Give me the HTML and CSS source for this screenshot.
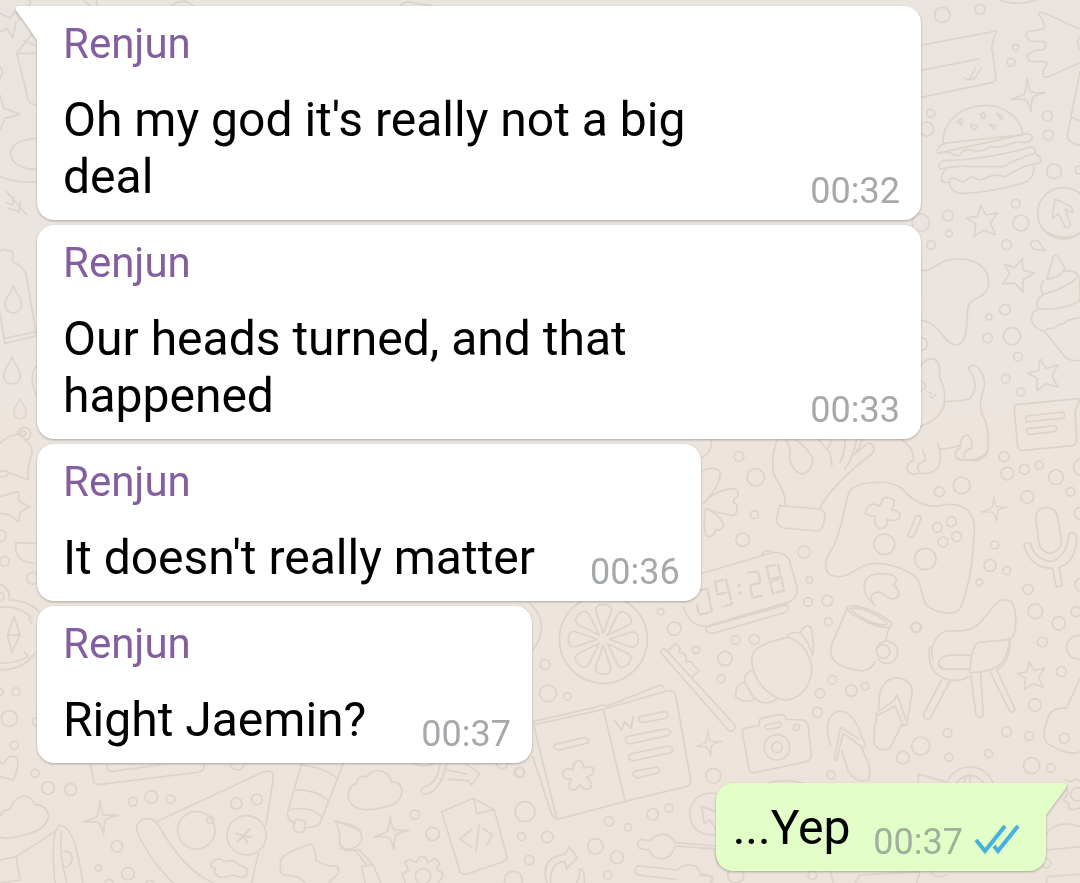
FILE: index.html
```
<!DOCTYPE html>
<html lang="en">
<head>
<meta charset="utf-8">
<meta name="viewport" content="width=device-width, initial-scale=1">
<title>Chat</title>
<link rel="stylesheet" href="styles.css">
</head>
<body>
<main class="chat">
<svg class="wallpaper" viewBox="0 0 1080 883" preserveAspectRatio="xMidYMin slice" aria-hidden="true">
  <defs>
    <path id="star" d="M0-48L12-16 48-18 22 10 32 46 0 28-32 42-22 6-47-16-13-16Z"/>
    <path id="spark" d="M-3-52Q2-12 8-10 20-7 52-8 18 0 14 6 8 18 8 50 0 18-8 14-18 10-52 12-16 0-12-5-6-18-3-52Z"/>
    <path id="drop" d="M0-38C-8-12-25 0-25 19A25 25 0 0 0 25 19C25 0 8-12 0-38Z"/>
  </defs>

  <!-- ticket, burger, hand, cursor -->
  <g transform="translate(900 0) scale(.3333)">
    <path d="M60 136L290 93Q270 135 278 160L288 235Q288 245 275 248L60 293M60 212L235 177M192 233L206 240 226 206M222 238L243 205M208 240L220 234"/>
    <path d="M540 88L435 40Q415 33 417 45 440 75 432 85 420 92 385 93 370 107 390 123 430 123 437 128 440 140 428 150 395 150 383 165 378 180 395 185 435 180 443 190 425 215 430 228 435 235 450 228L540 188M540 110Q525 128 540 148"/>
    <path d="M130 430C125 370 180 315 260 316 330 318 365 370 368 402M130 430L368 404M112 452Q115 435 135 430M368 404Q395 396 397 412 395 425 375 428 355 422 330 432 300 445 270 440 245 460 215 450 190 445 180 465 165 470 150 458 130 455 112 460Z"/>
    <path d="M130 482Q260 480 395 440 412 450 405 460 340 480 310 500 260 500 215 500 170 495 120 508 110 495 130 482ZM135 510Q125 520 124 540 130 550 148 546 150 530 165 535L190 547 212 530 240 540 280 525 315 530 370 500 422 487Q425 470 407 462M148 546Q150 580 190 580 290 575 380 545 405 530 401 497"/>
    <path d="M172 366L186 354 184 374ZM242 344L252 336 256 352 248 356ZM290 340L308 350 304 360ZM212 372L232 378 226 390 216 386ZM268 372L288 378 280 386Z"/>
    <path d="M540 215L502 405Q502 430 540 436M515 353L540 362"/>
    <circle cx="490" cy="640" r="77"/><path d="M465 597L515 620 518 637 496 628 512 675Q505 688 495 680L475 640 457 656Z"/>
    <use href="#spark" x="385" y="286"/><use href="#star" transform="translate(248 663) rotate(-8)"/>
    <circle cx="127" cy="45" r="23"/><circle cx="240" cy="28" r="15"/><circle cx="347" cy="142" r="9"/><circle cx="333" cy="187" r="12"/><circle cx="92" cy="340" r="12"/><circle cx="80" cy="387" r="21"/><circle cx="442" cy="348" r="15"/><circle cx="445" cy="405" r="15"/><circle cx="462" cy="514" r="22"/><circle cx="538" cy="510" r="12"/><circle cx="347" cy="611" r="13"/><circle cx="363" cy="669" r="24"/><circle cx="143" cy="647" r="16"/><circle cx="62" cy="668" r="26"/><circle cx="147" cy="701" r="10"/>
    <path d="M300 0Q350 20 410 0"/>
  </g>

  <!-- blob, cat, cupcake, card -->
  <g transform="translate(900 230) scale(.3333)">
    <path d="M60 120C90 130 110 100 140 91 220 75 270 110 266 165 255 215 205 195 203 240 200 300 200 345 165 345 130 340 115 270 60 272"/>
    <path d="M62 410Q75 385 98 386 125 395 118 440 140 480 132 530 110 575 60 590M138 515Q190 512 205 508 235 485 220 440L205 415Q215 400 232 410 260 440 252 475 235 520 245 550 270 590 264 660 255 690 225 692L200 690Q170 695 165 675 170 655 180 655 180 620 200 615 220 625 215 655 190 660 192 684M180 645Q150 658 118 656L113 640M118 656Q125 690 115 710 100 735 60 730 25 740 20 715 25 695 42 690 40 650 5 630M68 660Q80 690 75 692 50 700 54 715L60 728M84 485L94 492M88 500L98 504 108 492"/>
    <path d="M440 148L460 80Q465 70 477 83L495 115Q485 140 440 148ZM495 123Q530 120 535 140 500 175 430 193 415 175 430 152M430 193Q405 210 412 235 480 245 540 212M410 240Q390 250 395 275 410 300 432 304L445 296 465 294 475 284 490 282 500 272 540 262M434 304L490 375Q505 395 540 392M540 140V212"/>
    <path d="M350 524L540 505 525 545 530 635Q528 645 518 647L370 661Q355 662 353 650L343 540Q342 526 350 524ZM380 558L490 546Q498 555 490 564L382 576Q375 568 380 558ZM382 596L465 587Q475 595 466 604L386 614Q376 606 382 596Z"/>
    <path d="M430 0Q490 40 540 8M392 40Q395 28 415 33L436 62 405 58Q392 52 392 40Z"/>
    <use href="#star" transform="translate(352 132) rotate(18)"/><use href="#star" transform="translate(432 434) rotate(-14)"/>
    <circle cx="320" cy="44" r="15"/><circle cx="93" cy="45" r="13"/><circle cx="315" cy="239" r="16"/><circle cx="267" cy="261" r="9"/><circle cx="336" cy="319" r="26"/><circle cx="263" cy="324" r="14"/><circle cx="354" cy="380" r="13"/><circle cx="317" cy="446" r="13"/><circle cx="362" cy="486" r="12"/><circle cx="62" cy="342" r="20"/><circle cx="62" cy="468" r="14"/><circle cx="312" cy="680" r="15"/><circle cx="322" cy="731" r="19"/><circle cx="373" cy="718" r="15"/><circle cx="418" cy="706" r="12"/><circle cx="468" cy="742" r="22"/><circle cx="545" cy="712" r="24"/>
  </g>

  <!-- clover, hand, clock -->
  <g transform="translate(690 430) scale(.3333)">
    <path d="M30 125Q70 105 90 125 95 160 40 222 60 190 120 176 150 175 143 200 120 212 140 225 145 250 130 256 80 250 48 235 90 255 102 285 95 305 78 298 72 325 50 318 38 290 46 238M30 84Q65 75 65 28"/>
    <path d="M262 30Q240 80 252 135 290 190 285 226M288 30Q305 50 298 85 310 130 340 132 370 120 368 85 350 50 318 30M387 30L420 70 426 106M425 30L414 55M465 30Q465 70 450 98M500 30Q490 80 465 118M545 42Q560 55 545 72 430 160 388 236M515 30Q510 60 483 82L530 42Q540 38 548 44M268 227L390 237Q408 245 405 265L398 290Q392 304 380 303L280 294Q258 285 259 268Z"/>
    <path d="M30 432L240 370Q280 360 298 390L322 475Q322 505 300 515L50 588Q0 590-20 530M215 375Q225 355 248 366M48 592L290 524Q300 535 290 546L70 610Q45 610 48 592Z"/>
    <path stroke-width="7" stroke-dasharray="26 9" d="M28 482L52 476 66 545 28 555 20 520M74 456L108 448 126 522 98 530M76 460L82 493 118 486M174 428L204 424 212 458 180 466 188 504 220 496M230 410L264 404 272 440 238 448ZM240 456L274 444 282 482 248 490Z"/>
    <circle cx="147" cy="467" r="3"/><circle cx="151" cy="489" r="3"/>
    <circle cx="147" cy="79" r="15"/><circle cx="197" cy="142" r="26"/><circle cx="193" cy="254" r="12"/><circle cx="158" cy="329" r="20"/><circle cx="342" cy="366" r="18"/><circle cx="358" cy="449" r="10"/><circle cx="354" cy="516" r="13"/><circle cx="412" cy="512" r="16"/><circle cx="415" cy="575" r="12"/>
    <path d="M530 500Q510 450 545 435 590 425 615 440 625 455 610 465 630 480 626 495 615 515 590 500 565 475 545 495 540 510 555 526Z"/>
    <path d="M470 532C490 512 600 560 606 585 602 610 480 565 470 532ZM482 535C520 530 585 565 592 582 570 595 490 555 482 535Z"/>
  </g>

  <!-- gamepad, microphone -->
  <g transform="translate(870 450) scale(.3333)">
    <path d="M-60 120C-20 90 60 90 95 115 140 165 180 175 220 165 280 155 315 185 313 240 310 320 300 410 270 475 255 500 190 490 165 460 150 420 155 395 130 375 90 350 40 335 0 342-45 350-50 380-100 380-145 375-140 330-110 290-85 245-75 150-60 120Z"/>
    <path d="M38 148Q50 135 72 150 75 165 65 178 95 185 90 200 82 218 50 208 55 235 30 236 10 230 15 198 0 200-15 190-5 150 30 168ZM137 200Q148 193 154 205L132 258Q122 266 114 256Z"/>
    <circle cx="43" cy="283" r="31"/><circle cx="166" cy="327" r="32"/><circle cx="202" cy="232" r="15"/><circle cx="244" cy="215" r="15"/><circle cx="219" cy="276" r="15"/><circle cx="260" cy="260" r="15"/>
    <path d="M498 205Q495 175 530 172 560 175 564 205L575 275Q570 305 540 310 510 305 506 275ZM462 285Q467 270 483 282 490 325 540 335 590 325 596 255 606 238 620 258 620 335 567 352L577 405Q567 415 558 408L548 355Q480 355 462 285Z"/>
    <path d="M190 630C175 590 200 550 230 543 320 545 320 530 350 495 390 440 400 445 425 455 445 490 440 560 420 568L325 577Q305 590 300 660M420 568Q420 620 400 645L380 660M300 616Q240 612 220 620 205 630 205 645L215 657H300"/>
    <path d="M258 20Q270 35 285 30 330 35 355 0"/>
    <use href="#spark" transform="translate(374 177) scale(.76)"/>
    <circle cx="208" cy="125" r="15"/><circle cx="275" cy="106" r="25"/><circle cx="472" cy="141" r="19"/><circle cx="602" cy="125" r="13"/><circle cx="630" cy="190" r="17"/><circle cx="374" cy="285" r="12"/><circle cx="360" cy="346" r="18"/><circle cx="410" cy="362" r="12"/><circle cx="328" cy="397" r="10"/><circle cx="474" cy="418" r="15"/><circle cx="635" cy="404" r="20"/><circle cx="496" cy="484" r="22"/><circle cx="566" cy="520" r="20"/><circle cx="618" cy="485" r="15"/><circle cx="138" cy="532" r="15"/>
  </g>

  <!-- citrus, notebook, toothbrush -->
  <g transform="translate(520 590) scale(.3333)">
    <circle cx="250" cy="148" r="132"/>
    <path id="slice" d="M250 130L228 65Q225 43 250 43 277 43 273 65Z"/><use href="#slice" transform="rotate(45 250 148)"/><use href="#slice" transform="rotate(90 250 148)"/><use href="#slice" transform="rotate(135 250 148)"/><use href="#slice" transform="rotate(180 250 148)"/><use href="#slice" transform="rotate(225 250 148)"/><use href="#slice" transform="rotate(270 250 148)"/><use href="#slice" transform="rotate(315 250 148)"/>
    <path d="M30 40Q95 100 38 182M38 395L235 350Q245 342 262 348L415 287Q430 284 433 296M40 405L250 358 440 303Q460 300 467 315L512 570Q512 585 498 590L325 632 120 686Q105 690 95 672L38 500M42 410L110 684M250 358L314 628M40 395L42 410"/>
    <path d="M104 463L195 442Q212 447 203 459L117 480Q96 477 104 463ZM360 380L435 364Q450 370 440 384L368 398Q348 394 360 380ZM320 440L440 416Q460 424 445 436L328 462Q308 454 320 440ZM330 492L445 468Q467 474 452 488L338 513Q318 506 330 492ZM342 544L410 531Q425 538 414 549L352 564Q334 558 342 544Z"/>
    <path stroke-width="6" d="M283 390L305 420 314 396 333 415 340 380"/>
    <path d="M160 525Q174 502 190 522L190 535Q222 522 222 545 216 558 200 561 224 588 208 596 188 602 178 582 170 606 152 598 140 588 155 568 125 568 128 548 138 530 160 540Z"/>
    <path d="M422 188Q422 175 437 178L645 405Q648 425 628 424ZM445 182L467 160 480 175 478 188 492 190 500 205 498 215 515 215 520 225 537 242 518 260"/>
    <use href="#spark" transform="translate(566 461) scale(.76)"/>
    <circle cx="422" cy="65" r="10"/><circle cx="463" cy="116" r="20"/><circle cx="528" cy="180" r="11"/><circle cx="75" cy="223" r="15"/><circle cx="84" cy="310" r="25"/><circle cx="142" cy="319" r="11"/><circle cx="0" cy="547" r="14"/>
    <circle cx="572" cy="672" r="63"/><path d="M545 650L590 665M545 650L553 700 570 690 590 720"/>
  </g>

  <!-- croissant, mug, chair, camera, sandals, guitar -->
  <g transform="translate(700 620) scale(.3333)">
    <path d="M155 110Q165 70 265 52 320 70 335 140 335 220 265 240 235 240 210 220 155 180 155 110ZM262 50Q265 35 300 38 325 60 338 108M302 36Q315 10 332 20 345 60 337 108M155 150Q120 170 142 200 165 250 195 248 215 250 230 237M135 187Q105 190 107 230 125 250 160 240"/>
    <path d="M440-32L393 80Q380 140 485 153 515 150 525 125M568 20L558 58M528 90A33 33 0 1 1 535 118"/><circle cx="550" cy="94" r="20"/>
    <path d="M690 80Q680 140 715 165 760 195 805 170M725 180L670 283Q672 300 690 296L750 183M812 165L828 285Q840 300 850 285L842 160M870 155L930 275Q945 280 944 265L890 150M808 157Q870 160 905 130 930 90 928 55M715 130Q720 145 740 148H808"/>
    <path d="M133 325L178 316V305Q178 295 190 293L245 283Q258 285 258 298L310 300Q320 300 324 315L334 405Q333 420 320 425L165 458Q150 460 147 445L128 345Q127 328 133 325ZM197 315L240 306Q247 316 238 322L203 328Q193 326 197 315Z"/>
    <circle cx="231" cy="382" r="38"/><circle cx="231" cy="382" r="16"/><circle cx="289" cy="322" r="9"/>
    <path d="M392 378Q365 290 415 274 460 270 485 350L497 375Q497 385 485 380L430 340 410 420Q400 425 405 405L420 330Q422 315 430 328L480 358M425 390L445 455Q470 490 505 480 515 460 505 430L485 385M537 270Q530 175 595 173 640 185 636 220L620 315 610 318 585 258 530 288 530 278 585 240 590 225 598 240 618 300M530 290Q520 330 522 370 540 400 570 385L605 315"/>
    <path d="M1140 175L1100 265Q1050 260 1040 305 1020 360 1050 375 1110 410 1140 395"/><circle cx="1093" cy="355" r="15"/>
    <use href="#star" transform="translate(995 167) rotate(-10) scale(.88)"/>
    <circle cx="107" cy="60" r="13"/><circle cx="163" cy="58" r="15"/><circle cx="75" cy="116" r="21"/><circle cx="63" cy="176" r="12"/><circle cx="650" cy="22" r="15"/><circle cx="397" cy="179" r="13"/><circle cx="360" cy="220" r="14"/><circle cx="454" cy="212" r="17"/><circle cx="495" cy="199" r="11"/><circle cx="352" cy="277" r="15"/><circle cx="1027" cy="66" r="15"/><circle cx="1135" cy="82" r="35"/><circle cx="1084" cy="155" r="15"/><circle cx="1005" cy="255" r="19"/><circle cx="920" cy="335" r="15"/><circle cx="987" cy="348" r="13"/><circle cx="743" cy="339" r="13"/><circle cx="662" cy="378" r="27"/><circle cx="609" cy="413" r="19"/><circle cx="747" cy="412" r="12"/><circle cx="866" cy="401" r="12"/><circle cx="995" cy="437" r="24"/><circle cx="1052" cy="444" r="13"/><circle cx="40" cy="467" r="22"/><circle cx="393" cy="465" r="12"/><circle cx="810" cy="515" r="74"/><circle cx="810" cy="515" r="48"/><circle cx="1132" cy="523" r="20"/>
    <path d="M655 490V462L735 485M790 490L800 465M810 490V463M1140 482Q1125 475 1115 485L1095 480M1098 500L1105 520 1090 540 1105 550 1110 570 1140 565M1040 640Q1060 610 1110 612L1140 620M1040 690L1140 680M1045 770L1140 762M1040 770V789M200 490Q250 472 310 490M0 685H40L55 740M0 765L38 770 35 789M390 750L400 789M465 789L480 765 660 755 650 789M690 750Q700 780 740 765"/>
    <circle cx="107" cy="765" r="24"/><circle cx="337" cy="766" r="13"/><circle cx="1038" cy="730" r="14"/>
  </g>

  <!-- cloud, bell, pizza, lighthouse -->
  <g transform="translate(0 750) scale(.3333)">
    <path d="M0 35Q10 50 18 30 35 10 53 25 58 50 40 90L0 80M0 200Q5 180 30 178 40 145 70 138 95 140 105 163 140 165 146 198 140 235 90 250 35 270 0 262M0 330L48 320 165 245M48 320L60 390 0 399M165 399Q150 240 180 226 225 225 248 399M200 399Q175 300 185 245M190 305Q215 300 217 330 210 350 195 352M270 38L280 90Q282 105 295 104L600 66Q615 60 613 40M322 45Q320 65 335 64L480 45"/>
    <path d="M472 214L790 66Q822 55 820 85L798 225M775 310L755 399M520 399Q440 320 410 240 410 205 445 206 465 208 475 225 550 360 640 399M632 350Q630 330 660 326L680 336Q700 325 718 345 745 350 743 370 735 390 700 375 670 385 655 380 640 370 645 355Z"/>
    <circle cx="589" cy="241" r="56"/><circle cx="632" cy="210" r="11"/><circle cx="740" cy="256" r="59"/><path stroke-width="6" d="M708 250L730 258 750 237M712 275L730 258 755 260M730 258L742 278"/>
    <path d="M905 40L862 190Q865 215 885 220M1030 40L960 220Q940 235 915 232M900 45Q970 50 1008 82M885 118Q950 120 983 150M865 180Q930 165 965 200M880 235L883 212Q895 205 916 215L912 245Q890 252 880 235ZM1005 212L1080 240M1005 212Q1020 230 1020 285L1040 302 1080 300M842 330Q850 310 930 282 945 285 948 330 970 350 1010 348 1018 360 1015 370L985 399M842 330Q835 380 860 376 900 375 915 399"/>
    <use href="#spark" x="303" y="204"/>
    <circle cx="105" cy="70" r="12"/><circle cx="144" cy="114" r="19"/><circle cx="212" cy="118" r="18"/><circle cx="398" cy="155" r="13"/><circle cx="454" cy="141" r="19"/><circle cx="512" cy="148" r="13"/><circle cx="709" cy="160" r="17"/><circle cx="771" cy="148" r="16"/><circle cx="351" cy="289" r="17"/><circle cx="295" cy="354" r="9"/><circle cx="384" cy="371" r="19"/><circle cx="327" cy="401" r="12"/><circle cx="712" cy="38" r="22"/><circle cx="450" cy="403" r="12"/>
  </g>

  <!-- cloud, brush, file, arrows, gear -->
  <g transform="translate(340 750) scale(.3333)">
    <path d="M24 140Q25 105 50 100 50 75 80 80 100 55 130 65 152 75 153 95 185 95 186 125 180 165 130 172 35 195 24 140ZM305 185L400 145 463 180 502 325 490 335 380 373Q365 375 360 365ZM402 147L410 190 458 180M395 238L360 267 395 292M417 225L408 302M430 235L458 255 440 285"/>
    <path d="M300 40Q295 100 250 112 238 125 250 133 300 130 320 40M215 40Q260 55 285 40M375 40L420 70 395 105 385 92 325 88M320 60L380 72"/>
    <path d="M0 218Q70 225 65 270 50 305 0 295M45 300L80 345M60 302L100 345 122 399M75 399L65 350 95 345"/>
    <path d="M195 399L187 370 205 362 195 335 210 328 228 338 240 320 258 322 263 338 285 325 298 340 290 358 310 370 305 385 295 399"/><circle cx="249" cy="379" r="23"/>
    <path d="M620 399Q600 320 675 313L688 290 712 323 680 355 675 335Q630 335 632 399M720 358Q735 355 733 399M710 399Q722 380 718 360"/>
    <path d="M1128 297L1005 288Q995 325 965 327 935 325 928 300L900 296Q885 280 902 268L930 272Q945 252 970 253 995 255 1005 278L1128 288M1010 389L895 375Q878 365 892 347L1012 360Q1035 335 1070 350L1083 370 1115 380Q1120 390 1110 399"/>
    <use href="#spark" x="154" y="249"/>
    <circle cx="537" cy="67" r="15"/><circle cx="487" cy="38" r="18"/><circle cx="225" cy="194" r="14"/><circle cx="278" cy="252" r="20"/><circle cx="555" cy="185" r="30"/><circle cx="545" cy="260" r="12"/><circle cx="622" cy="261" r="17"/><circle cx="568" cy="330" r="14"/><circle cx="520" cy="391" r="27"/><circle cx="807" cy="214" r="14"/><circle cx="864" cy="232" r="11"/><circle cx="938" cy="193" r="17"/><circle cx="987" cy="174" r="12"/><circle cx="766" cy="289" r="23"/><circle cx="831" cy="322" r="19"/><circle cx="803" cy="375" r="12"/>
  </g>

  <!-- left margin -->
  <g transform="scale(.3333)">
    <path d="M0 40L30 55 45 35 60 60M48 65L38 112 20 85 0 95M110 85L50 160 85 300Q90 315 115 315M50 160H110M70 120L110 138M0 285L12 325 60 343 15 355 0 390M110 415Q30 420 32 465 45 510 115 508M0 530Q50 550 115 545M20 575L80 645M40 590L38 615 20 608M60 605L58 635 25 625M0 200Q15 215 0 235M90 0Q95 15 80 18M250 0L270 18M290 0V18M515 18Q530 0 560 5L580 18M1200 18L1220 5 1300 18"/>
    <path d="M0 755L8 748 38 755 38 785Q70 800 78 820L108 1000M0 940L15 1030 108 1008M12 1015L105 997"/><use href="#drop" x="40" y="895"/><use href="#drop" x="36" y="1108"/><use href="#drop" transform="translate(60 1223) scale(.75)"/>
    <path d="M0 1330Q25 1305 55 1302 95 1325 97 1360 80 1400 85 1440L25 1418Q20 1435 0 1430M0 1415Q15 1405 30 1420M52 1300A20 20 0 1 1 75 1322M108 1100Q85 1130 108 1185"/><circle cx="69" cy="1300" r="8"/>
    <path d="M0 1490L35 1480 55 1475 57 1505 90 1520 62 1535 55 1565 30 1545 0 1540"/>
    <path d="M115 1630L48 1628Q40 1685 100 1690M0 1755Q30 1760 28 1800 80 1800 118 1835M0 1822Q60 1815 95 1855M105 1960Q70 2010 0 2010M85 1970Q50 1990 0 1990M42 1850L22 1905 36 1958 60 1905ZM22 1905H60M85 1855L95 1870M72 1955L85 1970"/><circle cx="0" cy="1790" r="12"/><circle cx="0" cy="1608" r="18"/><circle cx="14" cy="1684" r="14"/><circle cx="98" cy="1735" r="18"/><circle cx="48" cy="2076" r="12"/><circle cx="0" cy="2076" r="10"/><circle cx="28" cy="2156" r="24"/><circle cx="43" cy="2236" r="12"/><circle cx="110" cy="2165" r="12"/>
  </g>
</svg>

<ol class="messages">
  <li class="bubble bubble-in bubble-tail">
    <svg class="tail tail-in" viewBox="0 0 22 36" aria-hidden="true"><path d="M22 0H3Q-1 0 0 4L21 34H22Z"/></svg>
    <h2 class="sender">Renjun</h2>
    <div class="row"><p class="text">Oh my god it's really not a big deal</p><time class="time">00:32</time></div>
  </li>
  <li class="bubble bubble-in">
    <h2 class="sender">Renjun</h2>
    <div class="row"><p class="text">Our heads turned, and that happened</p><time class="time">00:33</time></div>
  </li>
  <li class="bubble bubble-in">
    <h2 class="sender">Renjun</h2>
    <div class="row"><p class="text">It doesn't really matter</p><time class="time">00:36</time></div>
  </li>
  <li class="bubble bubble-in">
    <h2 class="sender">Renjun</h2>
    <div class="row"><p class="text">Right Jaemin?</p><time class="time">00:37</time></div>
  </li>
  <li class="bubble bubble-out">
    <svg class="tail tail-out" viewBox="0 0 22 36" aria-hidden="true"><path d="M0 0H19Q23 0 21 5L1 32V36H0Z"/></svg>
    <div class="row"><p class="text">...Yep</p><span class="status"><time class="time">00:37</time><svg class="ticks" viewBox="0 0 46 30" role="img" aria-label="Read"><path d="M2 16L11 27 31 2M20 22L24 27 44 2"/></svg></span></div>
  </li>
</ol>
</main>
</body>
</html>
```
FILE: styles.css
```
* { box-sizing: border-box; }

body {
  margin: 0;
  background: #ede4dc;
  color: #000;
  font-family: Roboto, "Liberation Sans", sans-serif;
}

.chat {
  position: relative;
  isolation: isolate;
  min-height: 100vh;
  overflow: hidden;
  background: linear-gradient(#e9e4de, #ece4df 40%, #ede4db 60%, #ece3da);
}

.wallpaper {
  position: absolute;
  inset: 0;
  z-index: -1;
  width: 100%;
  height: 100%;
  fill: none;
  stroke: #dcd4cb;
  stroke-width: 5;
  stroke-linecap: round;
  stroke-linejoin: round;
}

.messages {
  display: flex;
  flex-direction: column;
  align-items: flex-start;
  gap: 5px;
  margin: 0;
  padding: 6px 34px 12px 37px;
  list-style: none;
}

.bubble {
  position: relative;
  max-width: 884px;
  border-radius: 17px;
  filter: drop-shadow(0 1px 1px rgba(60, 50, 40, .35));
}

.bubble-in {
  padding: 13px 21px 8px 26px;
  background: #fff;
}

.bubble-tail { border-top-left-radius: 0; }

.bubble-out {
  align-self: flex-end;
  margin-top: 15px;
  padding: 16px 26px 8px 17px;
  border-top-right-radius: 0;
  background: #e1ffc7;
}

.tail {
  position: absolute;
  top: 0;
  width: 22px;
  height: 36px;
}

.tail-in { right: 100%; margin-right: -1px; fill: #fff; }
.tail-out { left: 100%; margin-left: -1px; fill: #e1ffc7; }

.sender {
  margin: 0 0 23px;
  color: #835f9f;
  font-size: 42px;
  font-weight: 400;
  line-height: 49px;
}

.row {
  display: flex;
  align-items: flex-end;
  justify-content: space-between;
  gap: 55px;
}

.bubble-out .row { gap: 23px; }

.text {
  margin: 0;
  padding-bottom: 7px;
  font-size: 48px;
  line-height: 57px;
}

.status {
  display: flex;
  align-items: center;
  gap: 11px;
}

.time {
  color: #a6a9ac;
  font-size: 36px;
  line-height: 42px;
}

.bubble-out .time { color: #a0b09c; }

.ticks {
  width: 46px;
  height: 30px;
  margin-bottom: 6px;
  fill: none;
  stroke: #45b1dc;
  stroke-width: 4;
}
```
